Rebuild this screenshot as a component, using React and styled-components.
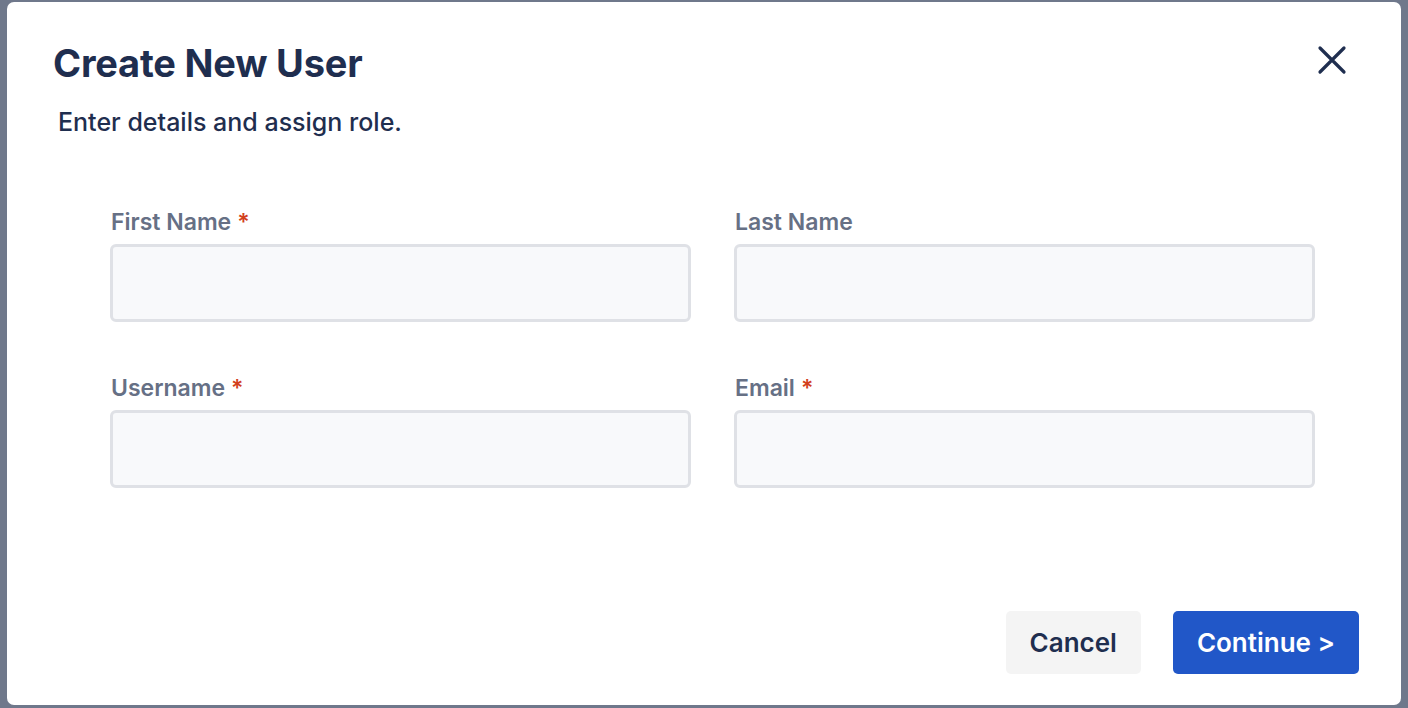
import React from "react";
import styled, { createGlobalStyle } from "styled-components";

const GlobalStyle = createGlobalStyle`
  html, body {
    margin: 0;
    padding: 0;
    height: 100%;
  }
  body {
    background: #6f788b;
    font-family: "Inter", "Liberation Sans", sans-serif;
    overflow: hidden;
  }
`;

const Backdrop = styled.div`
  width: 1408px;
  height: 708px;
  padding: 2px 7px 3px 7px;
  box-sizing: border-box;
  background: #6f788b;
`;

const Dialog = styled.div`
  height: 100%;
  background: #ffffff;
  border-radius: 7px;
  display: flex;
  flex-direction: column;
  box-sizing: border-box;
  padding: 36px 42px 31px 46px;
`;

const Header = styled.div`
  display: flex;
  justify-content: space-between;
  align-items: flex-start;
`;

const Title = styled.h2`
  margin: 0;
  font-size: 38px;
  line-height: 50px;
  font-weight: 700;
  color: #1f2e4f;
  letter-spacing: -0.2px;
`;

const CloseButton = styled.button`
  border: none;
  background: transparent;
  padding: 0;
  margin: 6px 11px 0 0;
  width: 32px;
  height: 32px;
  cursor: pointer;
  display: flex;
  align-items: center;
  justify-content: center;
`;

const Subtitle = styled.p`
  margin: 18px 0 0 5px;
  font-size: 25px;
  line-height: 32px;
  font-weight: 500;
  color: #1f2e4f;
`;

const Form = styled.div`
  display: grid;
  grid-template-columns: 581px 581px;
  column-gap: 43px;
  row-gap: 50px;
  margin: 68px 0 0 57px;
`;

const Field = styled.label`
  display: flex;
  flex-direction: column;
  gap: 6px;
`;

const Label = styled.span`
  font-size: 23px;
  line-height: 32px;
  font-weight: 600;
  color: #667085;
  padding-left: 1px;
`;

const Required = styled.span`
  color: #d2401c;
  margin-left: 6px;
`;

const Input = styled.input`
  height: 78px;
  box-sizing: border-box;
  border: 3px solid #dfe1e6;
  border-radius: 6px;
  background: #f8f9fb;
  outline: none;
  font-size: 20px;
  padding: 0 16px;
`;

const Footer = styled.div`
  margin-top: auto;
  display: flex;
  justify-content: flex-end;
  gap: 32px;
`;

const Button = styled.button`
  height: 63px;
  padding: 0 24px;
  border: none;
  border-radius: 5px;
  font-family: inherit;
  font-size: 26px;
  font-weight: 600;
  cursor: pointer;
  background: ${(p) => (p.$primary ? "#2157c8" : "#f4f4f4")};
  color: ${(p) => (p.$primary ? "#ffffff" : "#1f2e4f")};
`;

const fields = [
  { label: "First Name", required: true },
  { label: "Last Name", required: false },
  { label: "Username", required: true },
  { label: "Email", required: true },
];

const App = () => {
  return (
    <Backdrop>
      <GlobalStyle />
      <Dialog>
        <Header>
          <Title>Create New User</Title>
          <CloseButton aria-label="Close">
            <svg width="30" height="30" viewBox="0 0 30 30">
              <path
                d="M3 3 L27 27 M27 3 L3 27"
                stroke="#1f2e4f"
                strokeWidth="3.2"
                strokeLinecap="round"
              />
            </svg>
          </CloseButton>
        </Header>
        <Subtitle>Enter details and assign role.</Subtitle>

        <Form>
          {fields.map((f) => (
            <Field key={f.label}>
              <Label>
                {f.label}
                {f.required && <Required>*</Required>}
              </Label>
              <Input type="text" />
            </Field>
          ))}
        </Form>

        <Footer>
          <Button>Cancel</Button>
          <Button $primary>Continue &gt;</Button>
        </Footer>
      </Dialog>
    </Backdrop>
  );
};

export default App;
